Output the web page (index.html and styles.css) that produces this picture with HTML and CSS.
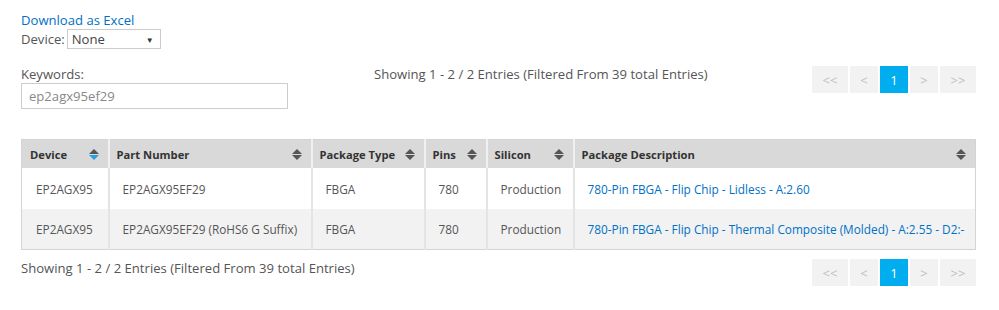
FILE: index.html
```html
<!DOCTYPE html>
<html>
<head>
<meta charset="utf-8">
<link rel="stylesheet" href="styles.css">
</head>
<body>
<div class="page">
  <div class="top">
    <a class="excel" href="#">Download as Excel</a>
    <div class="device-row">
      <span class="lbl">Device:</span>
      <div class="select"><span>None</span><span class="caret">&#9660;</span></div>
    </div>
  </div>
  <div class="filter-row">
    <div class="kw">
      <div class="lbl">Keywords:</div>
      <div class="input">ep2agx95ef29</div>
    </div>
    <div class="showing top-showing">Showing 1 - 2 / 2 Entries (Filtered From 39 total Entries)</div>
    <div class="pager">
      <span class="pg wide">&lt;&lt;</span><span class="pg">&lt;</span><span class="pg active">1</span><span class="pg">&gt;</span><span class="pg wide">&gt;&gt;</span>
    </div>
  </div>
  <table class="grid">
    <colgroup>
      <col class="c1"><col class="c2"><col class="c3"><col class="c4"><col class="c5"><col class="c6">
    </colgroup>
    <thead>
      <tr>
        <th><div class="th">Device<span class="sort active-down"><i class="up"></i><i class="down"></i></span></div></th>
        <th><div class="th">Part Number<span class="sort"><i class="up"></i><i class="down"></i></span></div></th>
        <th><div class="th">Package Type<span class="sort"><i class="up"></i><i class="down"></i></span></div></th>
        <th><div class="th">Pins<span class="sort"><i class="up"></i><i class="down"></i></span></div></th>
        <th><div class="th">Silicon<span class="sort"><i class="up"></i><i class="down"></i></span></div></th>
        <th><div class="th">Package Description<span class="sort"><i class="up"></i><i class="down"></i></span></div></th>
      </tr>
    </thead>
    <tbody>
      <tr>
        <td>EP2AGX95</td>
        <td>EP2AGX95EF29</td>
        <td>FBGA</td>
        <td>780</td>
        <td>Production</td>
        <td><a href="#">780-Pin FBGA - Flip Chip - Lidless - A:2.60</a></td>
      </tr>
      <tr class="alt">
        <td>EP2AGX95</td>
        <td>EP2AGX95EF29 (RoHS6 G Suffix)</td>
        <td>FBGA</td>
        <td>780</td>
        <td>Production</td>
        <td><a href="#">780-Pin FBGA - Flip Chip - Thermal Composite (Molded) - A:2.55 - D2:-</a></td>
      </tr>
    </tbody>
  </table>
  <div class="bottom-row">
    <div class="showing">Showing 1 - 2 / 2 Entries (Filtered From 39 total Entries)</div>
    <div class="pager">
      <span class="pg wide">&lt;&lt;</span><span class="pg">&lt;</span><span class="pg active">1</span><span class="pg">&gt;</span><span class="pg wide">&gt;&gt;</span>
    </div>
  </div>
</div>
</body>
</html>
```

FILE: styles.css
```css
html, body {
  margin: 0;
  padding: 0;
  background: #fff;
}
body {
  font-family: "Open Sans", Lato, sans-serif;
  font-size: 13.1px;
  color: #555;
}
.page {
  width: 955px;
  padding: 12px 0 0 21px;
}
.top {
  display: flex;
  flex-direction: column;
}
.excel {
  color: #0071c5;
  text-decoration: none;
  font-size: 13.1px;
  line-height: 17px;
}
.device-row {
  display: flex;
  align-items: center;
  height: 20px;
}
.lbl {
  font-size: 13.1px;
  line-height: 17px;
  color: #555;
}
.device-row .lbl {
  margin-right: 2px;
}
.select {
  width: 94px;
  height: 20px;
  box-sizing: border-box;
  border: 1px solid #ccc;
  display: flex;
  align-items: center;
  justify-content: space-between;
  padding: 0 6px 0 4px;
  font-size: 13.1px;
  color: #444;
}
.caret {
  font-size: 8px;
  color: #333;
}
.filter-row {
  display: flex;
  margin-top: 17px;
  height: 43px;
}
.kw {
  width: 267px;
  display: flex;
  flex-direction: column;
}
.kw .lbl {
  height: 17px;
}
.input {
  height: 26px;
  box-sizing: border-box;
  border: 1px solid #ccc;
  padding: 0 7px;
  display: flex;
  align-items: center;
  color: #888;
  font-size: 13.1px;
}
.showing {
  font-size: 13.1px;
  line-height: 17px;
  color: #555;
}
.top-showing {
  margin-left: 86px;
}
.pager {
  margin-left: auto;
  display: flex;
  gap: 2px;
  height: 27px;
}
.pg {
  width: 28px;
  height: 27px;
  background: #f2f2f2;
  color: #c0c0c0;
  display: flex;
  align-items: center;
  justify-content: center;
  font-family: "Open Sans", sans-serif;
  font-size: 13px;
}
.pg.wide {
  width: 36px;
}
.pg.active {
  background: #00aeef;
  color: #fff;
  font-size: 13px;
}
.grid {
  margin-top: 30px;
  width: 955px;
  border-collapse: collapse;
  table-layout: fixed;
  border: 1px solid #d4d4d4;
}
.c1 { width: 87px; }
.c2 { width: 203px; }
.c3 { width: 113px; }
.c4 { width: 62px; }
.c5 { width: 87px; }
.c6 { width: auto; }
th {
  background: #d9d9d9;
  height: 28px;
  padding: 0 8px 0 7px;
  text-align: left;
  font-weight: bold;
  color: #333;
  font-size: 11.2px;
  border-left: 2px solid #f0f0f0;
}
th:first-child { border-left: 0; padding-left: 8px; }
.th {
  display: flex;
  align-items: center;
  justify-content: space-between;
}
.sort {
  display: flex;
  flex-direction: column;
  gap: 1px;
  margin-right: 1px;
}
.sort i {
  display: block;
  width: 0;
  height: 0;
  border-left: 5px solid transparent;
  border-right: 5px solid transparent;
}
.sort .up { border-bottom: 5px solid #555; }
.sort .down { border-top: 5px solid #555; }
.sort.active-down .down { border-top-color: #2aa0e0; }
td {
  height: 40px;
  padding: 0 14px 0 13px;
  font-size: 11.8px;
  color: #555;
  border-left: 2px solid #e4e4e4;
  white-space: nowrap;
  overflow: hidden;
}
td:first-child { border-left: 0; padding-left: 14px; }
tbody tr:first-child td { height: 41px; }
tr.alt td { background: #f2f2f2; }
td a {
  color: #0071c5;
  text-decoration: none;
}
.bottom-row {
  display: flex;
  margin-top: 9px;
  align-items: flex-start;
}
.bottom-row .showing {
  margin-top: 1px;
}
```
